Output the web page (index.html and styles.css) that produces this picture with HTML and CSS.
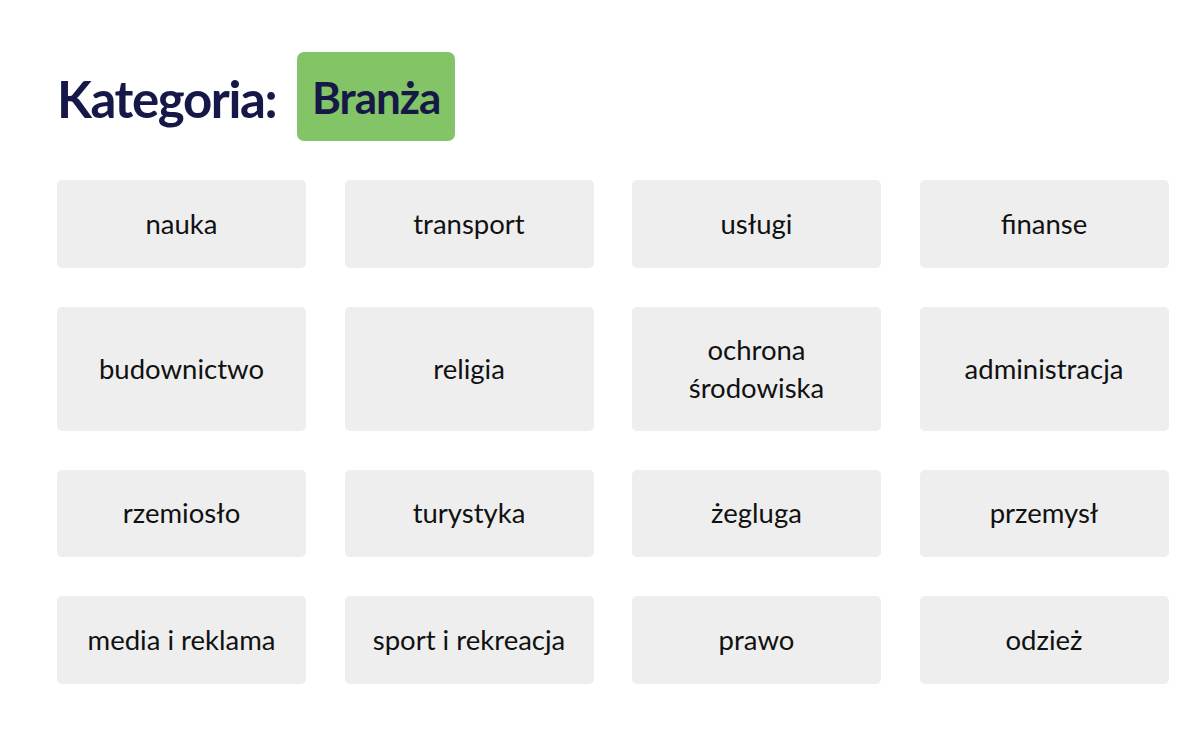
FILE: index.html
```html
<!DOCTYPE html>
<html lang="pl">
<head>
<meta charset="utf-8">
<title>Kategoria: Branża</title>
<link rel="stylesheet" href="styles.css">
</head>
<body>
<main class="page">
  <header class="heading">
    <h1 class="heading-label">Kategoria:</h1>
    <span class="badge">Branża</span>
  </header>
  <section class="grid">
    <div class="tile">nauka</div>
    <div class="tile">transport</div>
    <div class="tile">usługi</div>
    <div class="tile">finanse</div>
    <div class="tile">budownictwo</div>
    <div class="tile">religia</div>
    <div class="tile">ochrona<br>środowiska</div>
    <div class="tile">administracja</div>
    <div class="tile">rzemiosło</div>
    <div class="tile">turystyka</div>
    <div class="tile">żegluga</div>
    <div class="tile">przemysł</div>
    <div class="tile">media i reklama</div>
    <div class="tile">sport i rekreacja</div>
    <div class="tile">prawo</div>
    <div class="tile">odzież</div>
  </section>
</main>
</body>
</html>
```
FILE: styles.css
```css
html, body {
  margin: 0;
  padding: 0;
  background: #ffffff;
}
body {
  font-family: "Lato", "Noto Sans", sans-serif;
}
.page {
  padding: 52px 0 0 57px;
}
.heading {
  display: flex;
  align-items: center;
  gap: 21px;
  height: 89px;
}
.heading-label {
  margin: 0;
  padding-top: 4px;
  font-size: 51px;
  font-weight: 700;
  color: #161848;
  letter-spacing: -1.4px;
}
.badge {
  display: flex;
  align-items: center;
  justify-content: center;
  width: 158px;
  height: 89px;
  background: #82c466;
  border-radius: 7px;
  font-size: 44px;
  font-weight: 700;
  color: #161848;
  letter-spacing: -1px;
}
.grid {
  margin-top: 39px;
  display: grid;
  grid-template-columns: repeat(4, 249px);
  column-gap: 38.5px;
  row-gap: 39px;
}
.tile {
  display: flex;
  align-items: center;
  justify-content: center;
  text-align: center;
  min-height: 87.5px;
  box-sizing: border-box;
  padding: 24px 10px;
  background: #eeeeee;
  border-radius: 5px;
  font-size: 27.5px;
  line-height: 38px;
  color: #111111;
}
```
